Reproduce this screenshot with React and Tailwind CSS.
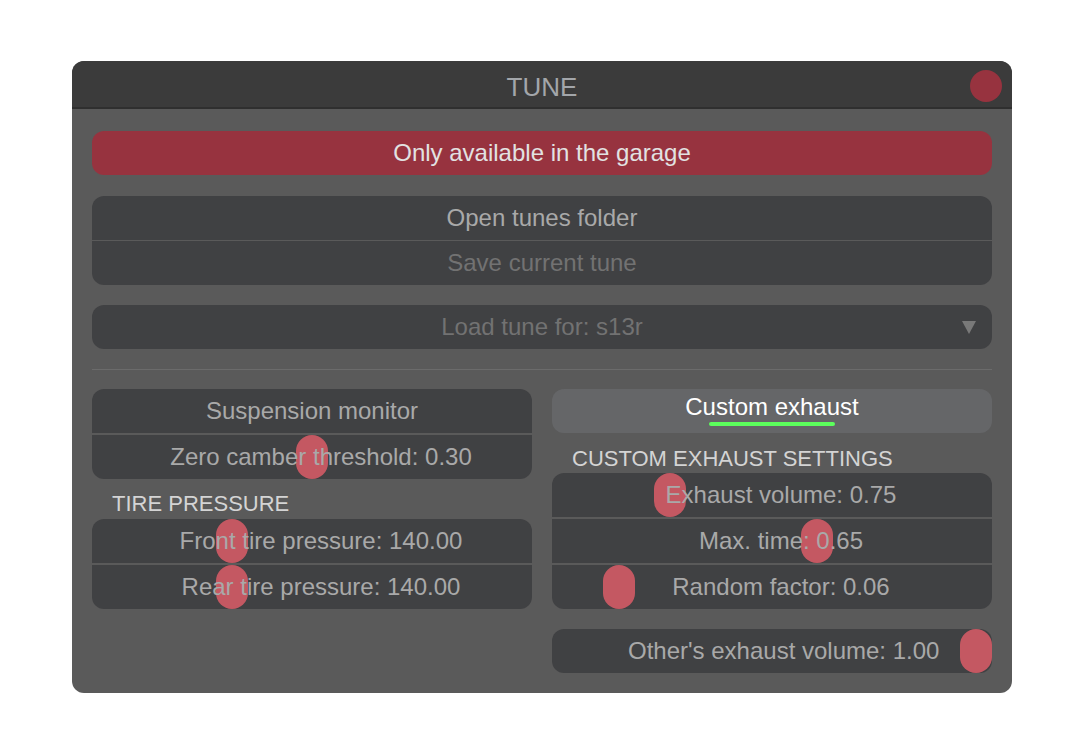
const font = { fontFamily: '"Liberation Sans", Arial, sans-serif' };

function Row({ children, dim, knob }) {
  return (
    <div className={`relative h-[44px] flex items-center justify-center bg-[#404143] ${knob !== undefined ? 'pl-[18px]' : ''}`}>
      {knob !== undefined && (
        <div
          className="absolute top-0 h-[44px] w-[32px] rounded-full bg-[#c45862]"
          style={{ left: knob }}
        />
      )}
      <span className={`relative text-[24px] ${dim ? 'text-[#727272]' : 'text-[#a9a9a9]'}`}>{children}</span>
    </div>
  );
}

function Group({ children, tight }) {
  return (
    <div className={`flex flex-col rounded-[12px] overflow-hidden ${tight ? 'gap-[1px]' : 'gap-[2px]'}`}>
      {children}
    </div>
  );
}

export default function App() {
  return (
    <div className="min-h-screen bg-white pt-[61px] pl-[72px]" style={font}>
      <div className="w-[940px] h-[632px] rounded-[12px] overflow-hidden bg-[#5a5a5a] flex flex-col">
        <header className="h-[48px] pt-[6px] bg-[#3b3b3b] border-b-2 border-[#2f2f2f] flex items-center justify-center relative">
          <span className="text-[26px] text-[#a3a6aa]">TUNE</span>
          <div className="absolute right-[10px] top-[9px] w-[32px] h-[32px] rounded-full bg-[#97333f]" />
        </header>

        <div className="px-[20px] pt-[22px] flex flex-col">
          <div className="h-[44px] rounded-[12px] bg-[#97333f] flex items-center justify-center text-[24px] text-[#e2e2e2]">
            Only available in the garage
          </div>

          <div className="mt-[21px]">
            <Group tight>
              <Row>Open tunes folder</Row>
              <Row dim>Save current tune</Row>
            </Group>
          </div>

          <div className="mt-[20px] relative h-[44px] rounded-[12px] bg-[#404143] flex items-center justify-center">
            <span className="text-[24px] text-[#727272]">Load tune for: s13r</span>
            <svg className="absolute right-[16px] top-[16px]" width="14" height="13" viewBox="0 0 14 13">
              <path d="M0 0 L14 0 L7 13 Z" fill="#797979" />
            </svg>
          </div>

          <div className="mt-[20px] h-px bg-[#6b6b6b]" />

          <div className="mt-[19px] grid grid-cols-2 gap-[20px]">
            <div className="flex flex-col">
              <Group>
                <Row>Suspension monitor</Row>
                <Row knob={204}>Zero camber threshold: 0.30</Row>
              </Group>
              <div className="h-[40px] flex items-center pl-[20px] pt-[8px] text-[22px] text-[#d4d4d4]">TIRE PRESSURE</div>
              <Group>
                <Row knob={124}>Front tire pressure: 140.00</Row>
                <Row knob={124}>Rear tire pressure: 140.00</Row>
              </Group>
            </div>

            <div className="flex flex-col">
              <div className="relative h-[44px] rounded-[12px] bg-[#656668] flex flex-col items-center">
                <span className="text-[24px] text-white leading-[28px] mt-[4px]">Custom exhaust</span>
                <div className="absolute top-[33px] left-[157px] w-[126px] h-[4px] rounded-full bg-[#5cff5c]" />
              </div>
              <div className="h-[40px] flex items-center pl-[20px] pt-[10px] text-[22px] text-[#d4d4d4]">CUSTOM EXHAUST SETTINGS</div>
              <Group>
                <Row knob={102}>Exhaust volume: 0.75</Row>
                <Row knob={249}>Max. time: 0.65</Row>
                <Row knob={51}>Random factor: 0.06</Row>
              </Group>
              <div className="mt-[20px]">
                <Group>
                  <div className="relative h-[44px] flex items-center bg-[#404143]">
                    <span className="relative ml-[76px] text-[24px] text-[#a9a9a9]">Other's exhaust volume: 1.00</span>
                    <div className="absolute right-0 top-0 h-[44px] w-[32px] rounded-full bg-[#c45862]" />
                  </div>
                </Group>
              </div>
            </div>
          </div>
        </div>
      </div>
    </div>
  );
}
